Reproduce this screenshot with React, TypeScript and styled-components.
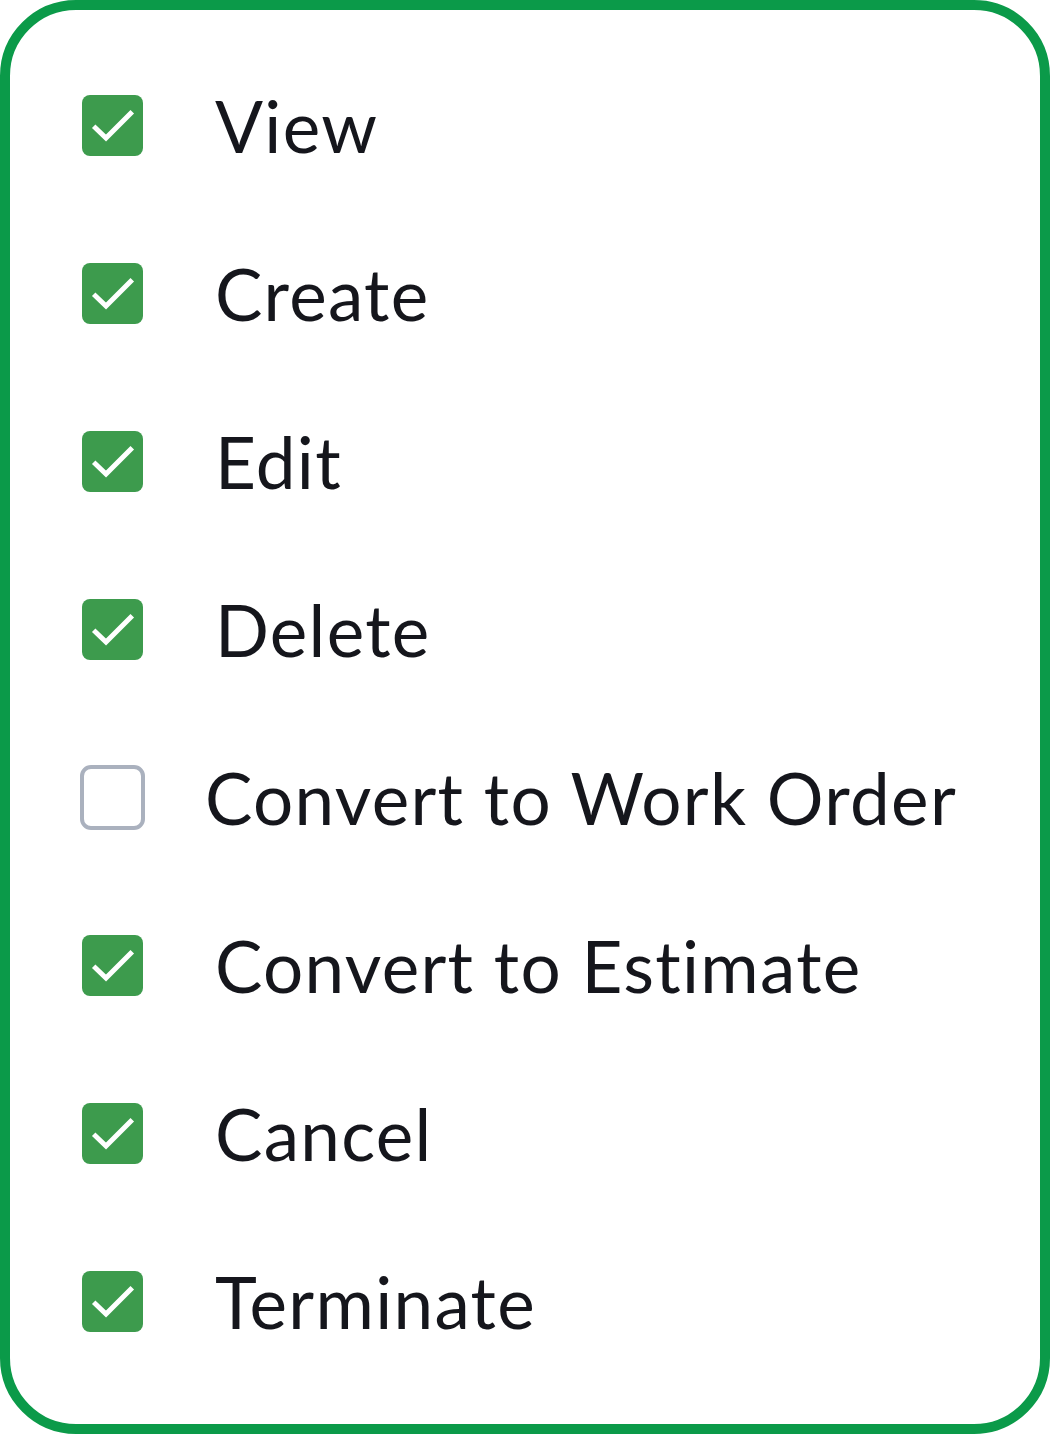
import React from 'react';
import styled, { createGlobalStyle } from 'styled-components';

const GlobalStyle = createGlobalStyle`
  html, body {
    margin: 0;
    padding: 0;
    background: #ffffff;
  }
  body {
    font-family: Lato, 'Noto Sans', sans-serif;
  }
`;

const Card = styled.div`
  box-sizing: border-box;
  width: 1050px;
  height: 1434px;
  border: 10px solid #0b9a49;
  border-radius: 76px;
  background: #ffffff;
  padding: 31px 0 0 72px;
  display: flex;
  flex-direction: column;
`;

const Row = styled.label<{ $checked: boolean }>`
  display: flex;
  align-items: center;
  height: 168px;
  gap: ${(p) => (p.$checked ? '72px' : '60px')};
  margin-left: ${(p) => (p.$checked ? '0' : '-2px')};
  cursor: pointer;
`;

const Box = styled.span<{ $checked: boolean }>`
  box-sizing: border-box;
  flex: none;
  display: flex;
  align-items: center;
  justify-content: center;
  width: ${(p) => (p.$checked ? '61px' : '65px')};
  height: ${(p) => (p.$checked ? '61px' : '65px')};
  border-radius: ${(p) => (p.$checked ? '8px' : '11px')};
  background: ${(p) => (p.$checked ? '#3d9b4d' : '#ffffff')};
  border: ${(p) => (p.$checked ? 'none' : '4px solid #aab1be')};
`;

const Label = styled.span`
  font-family: Lato, 'Noto Sans', sans-serif;
  font-size: 71px;
  line-height: 1;
  letter-spacing: 1.3px;
  color: #15161c;
  white-space: nowrap;
`;

type Permission = {
  label: string;
  checked: boolean;
};

const permissions: Permission[] = [
  { label: 'View', checked: true },
  { label: 'Create', checked: true },
  { label: 'Edit', checked: true },
  { label: 'Delete', checked: true },
  { label: 'Convert to Work Order', checked: false },
  { label: 'Convert to Estimate', checked: true },
  { label: 'Cancel', checked: true },
  { label: 'Terminate', checked: true },
];

const Check = () => (
  <svg width="61" height="61" viewBox="0 0 61 61" fill="none">
    <path
      d="M13.5 33 L24 43 L48.5 18.5"
      stroke="#ffffff"
      strokeWidth="5"
      strokeLinecap="square"
      strokeLinejoin="miter"
    />
  </svg>
);

const App: React.FC = () => {
  return (
    <>
      <GlobalStyle />
      <Card>
        {permissions.map((item) => (
          <Row key={item.label} $checked={item.checked}>
            <Box $checked={item.checked}>{item.checked ? <Check /> : null}</Box>
            <Label>{item.label}</Label>
          </Row>
        ))}
      </Card>
    </>
  );
};

export default App;
